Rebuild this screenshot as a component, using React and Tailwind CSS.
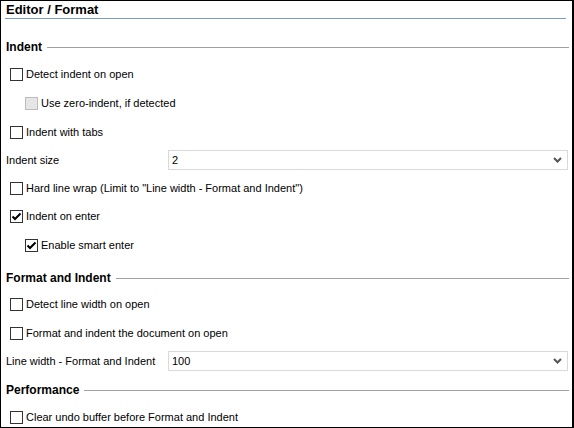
import React from "react";

const Check = ({ checked, disabled }) => (
  <span
    className={
      "flex h-[13px] w-[13px] shrink-0 items-center justify-center border " +
      (disabled ? "border-[#bcbcbc] bg-[#e6e6e6]" : "border-[#333333] bg-white")
    }
  >
    {checked && (
      <svg width="11" height="11" viewBox="0 0 11 11">
        <path d="M1.5 5.5 L4 8 L9.5 2.5" fill="none" stroke="#000" strokeWidth="2" />
      </svg>
    )}
  </span>
);

const CheckRow = ({ label, checked, disabled, indent, mt }) => (
  <div className={"flex h-[20px] items-center gap-[3px] " + (indent ? "pl-[24px] " : "pl-[9px] ") + mt}>
    <Check checked={checked} disabled={disabled} />
    <span>{label}</span>
  </div>
);

const Header = ({ title, mt }) => (
  <div className={"flex h-[20px] items-center gap-[5px] pl-[5px] pr-[3px] " + mt}>
    <span className="text-[12px] font-bold">{title}</span>
    <span className="h-px flex-1 bg-[#a0a0a0]" />
  </div>
);

const SelectRow = ({ label, value, mt }) => (
  <div className={"flex h-[20px] items-center pl-[5px] pr-[4px] " + mt}>
    <span className="w-[162px]">{label}</span>
    <div className="flex h-[20px] flex-1 items-center justify-between border border-[#d9d9d9] pl-[3px] pr-[5px]">
      <span>{value}</span>
      <svg width="9" height="6" viewBox="0 0 9 6">
        <path d="M1 1 L4.5 4.5 L8 1" fill="none" stroke="#555" strokeWidth="2" />
      </svg>
    </div>
  </div>
);

export default function App() {
  return (
    <div className="h-[428px] w-[574px] overflow-hidden border border-r-2 border-black bg-white font-['Liberation_Sans',Arial,sans-serif] text-[11px] text-black">
      <div className="ml-[4px] mr-[6px] flex h-[18px] items-end border-b border-[#7a9cc6] pl-[1px]">
        <span className="text-[13px] font-bold leading-[16px]">Editor / Format</span>
      </div>

      <Header title="Indent" mt="mt-[18px]" />
      <CheckRow label="Detect indent on open" mt="mt-[7px]" />
      <CheckRow label="Use zero-indent, if detected" disabled indent mt="mt-[9px]" />
      <CheckRow label="Indent with tabs" mt="mt-[9px]" />
      <SelectRow label="Indent size" value="2" mt="mt-[8px]" />
      <CheckRow label={'Hard line wrap (Limit to "Line width - Format and Indent")'} mt="mt-[8px]" />
      <CheckRow label="Indent on enter" checked mt="mt-[8px]" />
      <CheckRow label="Enable smart enter" checked indent mt="mt-[9px]" />

      <Header title="Format and Indent" mt="mt-[13px]" />
      <CheckRow label="Detect line width on open" mt="mt-[6px]" />
      <CheckRow label="Format and indent the document on open" mt="mt-[9px]" />
      <SelectRow label="Line width - Format and Indent" value="100" mt="mt-[8px]" />

      <Header title="Performance" mt="mt-[9px]" />
      <CheckRow label="Clear undo buffer before Format and Indent" mt="mt-[7px]" />
    </div>
  );
}
